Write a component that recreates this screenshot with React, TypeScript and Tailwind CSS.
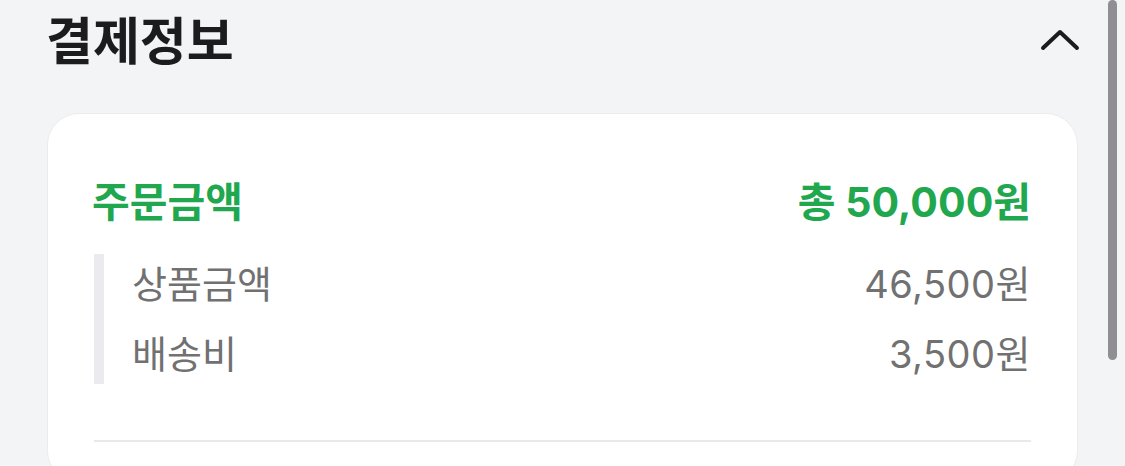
import React from 'react';

const rows = [
  { label: '상품금액', value: '46,500원' },
  { label: '배송비', value: '3,500원' },
];

export default function App() {
  return (
    <div
      className="relative h-[466px] w-[1125px] overflow-hidden bg-[#f3f4f6] px-[47px] pt-[12px]"
      style={{ fontFamily: '"Inter", "Noto Sans CJK KR", sans-serif' }}
    >
      {/* header */}
      <div className="flex h-[60px] items-center justify-between">
        <h1 className="ml-[-1px] text-[51px] font-bold leading-[60px] text-[#1c1c1e]">결제정보</h1>
        <svg width="40" height="24" viewBox="0 0 40 24" className="mr-[-2px] mt-[-4px]" fill="none">
          <path d="M3 20 L20 4 L37 20" stroke="#1c1c1e" strokeWidth="4" strokeLinecap="round" strokeLinejoin="round" />
        </svg>
      </div>

      {/* card */}
      <div className="mt-[41px] rounded-[32px] border border-[#ececee] bg-white px-[46px] pt-[63px] pb-[40px]">
        <div className="flex h-[50px] items-center justify-between text-[41px] font-bold leading-[50px] text-[#21a84f]">
          <span className="ml-[-2px]">주문금액</span>
          <span>총 50,000원</span>
        </div>

        <div className="mt-[27px] flex flex-col gap-5 border-l-[10px] border-[#ebebef] py-[5px] pl-[28px]">
          {rows.map((r) => (
            <div key={r.label} className="flex h-[50px] items-center justify-between text-[38px] leading-[50px] text-[#717171]">
              <span>{r.label}</span>
              <span className="tracking-[0.5px]">{r.value}</span>
            </div>
          ))}
        </div>

        <div className="mt-[56px] h-[2px] bg-[#e9e9ec]" />
      </div>

      {/* scrollbar */}
      <div className="absolute right-[8px] top-0 h-[360px] w-[9px] rounded-full bg-[#8e8e93]" />
    </div>
  );
}
